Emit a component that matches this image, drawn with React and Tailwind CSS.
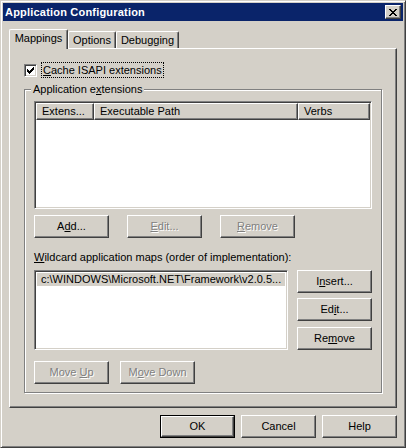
import React from 'react'

const raised =
  'border border-t-white border-l-white border-r-[#404040] border-b-[#404040] shadow-[inset_-1px_-1px_0_#808080]'
const sunken =
  'border border-t-[#808080] border-l-[#808080] border-r-white border-b-white shadow-[inset_1px_1px_0_#404040,inset_-1px_-1px_0_#d4d0c8]'
const disabledText = 'text-[#808080] [text-shadow:1px_1px_0_#fff]'

function Btn({ children, disabled, className = '', isDefault }) {
  const inner = (
    <div
      className={`flex items-center justify-center w-full h-full ${raised} ${disabled ? disabledText : 'text-black'}`}
    >
      <span className="whitespace-pre">{children}</span>
    </div>
  )
  if (isDefault) {
    return (
      <div className={`w-[75px] h-[23px] border border-black ${className}`}>
        {inner}
      </div>
    )
  }
  return <div className={`w-[75px] h-[23px] ${className}`}>{inner}</div>
}

function Tab({ label, active, className = '' }) {
  return (
    <div
      className={`flex items-center justify-center border-l border-t border-l-white border-t-white border-r border-r-[#404040] shadow-[inset_-1px_0_0_#808080] rounded-tl-[2px] rounded-tr-[2px] bg-[#d4d0c8] ${
        active ? 'h-[20px] -mb-px relative z-10 pb-[2px]' : 'h-[17px]'
      } ${className}`}
    >
      {label}
    </div>
  )
}

function PixelGlyph({ rows }) {
  return (
    <svg width={rows[0].length} height={rows.length} shapeRendering="crispEdges">
      {rows.map((r, y) =>
        r.split('').map((c, x) => (c === 'x' ? <rect key={`${x}-${y}`} x={x} y={y} width="1" height="1" fill="#000" /> : null))
      )}
    </svg>
  )
}

// classic 7x7 tick and caption close cross
const tick = ['......x', '.....xx', 'x...xxx', 'xx.xxx.', 'xxxxx..', '.xxx...', '..x....']
const cross = ['xx....xx', '.xx..xx.', '..xxxx..', '...xx...', '..xxxx..', '.xx..xx.', 'xx....xx']

export default function App() {
  return (
    <div className="w-[406px] h-[448px] bg-[#d4d0c8] border border-t-[#d4d0c8] border-l-[#d4d0c8] border-r-[#404040] border-b-[#404040] shadow-[inset_1px_1px_0_#fff,inset_-1px_-1px_0_#808080] p-[2px] flex flex-col font-['Liberation_Sans',Arial,sans-serif] text-[11px] leading-[13px] text-black select-none">
      {/* Title bar */}
      <div className="h-[18px] bg-[#0a246a] flex items-center justify-between pl-[2px] pr-[2px]">
        <span className="text-white font-bold text-[11px] tracking-[0.2px]">Application Configuration</span>
        <div className={`w-[16px] h-[14px] bg-[#d4d0c8] flex items-center justify-center ${raised}`}>
          <PixelGlyph rows={cross} />
        </div>
      </div>

      {/* Client area */}
      <div className="flex-1 flex flex-col pl-[6px] pr-[6px] pt-[8px]">
        {/* Tabs */}
        <div className="flex items-end h-[19px]">
          <Tab label="Mappings" active className="w-[59px]" />
          <Tab label="Options" className="w-[48px]" />
          <Tab label="Debugging" className="w-[63px]" />
        </div>

        {/* Tab panel */}
        <div className="h-[360px] border border-t-white border-l-white border-r-[#404040] border-b-[#404040] shadow-[inset_-1px_-1px_0_#808080] pl-[14px] pt-[13px] flex flex-col">
          {/* Checkbox */}
          <div className="flex items-center h-[16px]">
            <div className={`w-[13px] h-[13px] bg-white flex items-center justify-center ${sunken}`}>
              <PixelGlyph rows={tick} />
            </div>
            <div className="ml-[4px] h-[16px] px-[1px] border border-dotted border-black flex items-center">
              <span>
                <u>C</u>ache ISAPI extensions
              </span>
            </div>
          </div>

          {/* Group box */}
          <div className="relative mt-[11px] w-[358px] h-[304px] border border-[#808080] shadow-[1px_1px_0_#fff,inset_1px_1px_0_#fff] pl-[9px] pt-[11px] flex flex-col">
            <span className="absolute -top-[7px] left-[6px] px-[2px] bg-[#d4d0c8]">
              Application e<u>x</u>tensions
            </span>

            {/* List view */}
            <div className={`w-[338px] h-[108px] bg-white p-[1px] flex flex-col ${sunken}`}>
              <div className="flex h-[17px]">
                <div className={`w-[58px] h-full bg-[#d4d0c8] pl-[5px] flex items-center ${raised}`}>Extens...</div>
                <div className={`w-[204px] h-full bg-[#d4d0c8] pl-[5px] flex items-center ${raised}`}>Executable Path</div>
                <div className={`w-[72px] h-full bg-[#d4d0c8] pl-[5px] flex items-center ${raised}`}>Verbs</div>
              </div>
            </div>

            <div className="flex gap-[18px] mt-[6px]">
              <Btn>
                A<u>d</u>d...
              </Btn>
              <Btn disabled>
                <u>E</u>dit...
              </Btn>
              <Btn disabled>
                <u>R</u>emove
              </Btn>
            </div>

            <div className="mt-[13px] h-[13px] whitespace-nowrap">
              <u>W</u>ildcard application maps (order of implementation):
            </div>

            <div className="flex mt-[6px]">
              <div className={`w-[254px] h-[80px] bg-white p-[2px] ${sunken}`}>
                <div className="h-[13px] bg-[#d4d0c8] pl-[4px] whitespace-nowrap overflow-hidden">
                  c:\WINDOWS\Microsoft.NET\Framework\v2.0.5...
                </div>
              </div>
              <div className="ml-[9px] flex flex-col">
                <Btn>
                  I<u>n</u>sert...
                </Btn>
                <Btn className="mt-[5px]">
                  Ed<u>i</u>t...
                </Btn>
                <Btn className="mt-[6px]">
                  Re<u>m</u>ove
                </Btn>
              </div>
            </div>

            <div className="flex gap-[11px] mt-[11px]">
              <Btn disabled>
                Move <u>U</u>p
              </Btn>
              <Btn disabled>
                M<u>o</u>ve Down
              </Btn>
            </div>
          </div>
        </div>

        {/* Dialog buttons */}
        <div className="flex justify-end gap-[6px] mt-[7px]">
          <Btn isDefault>OK</Btn>
          <Btn>Cancel</Btn>
          <Btn>Help</Btn>
        </div>
      </div>
    </div>
  )
}
